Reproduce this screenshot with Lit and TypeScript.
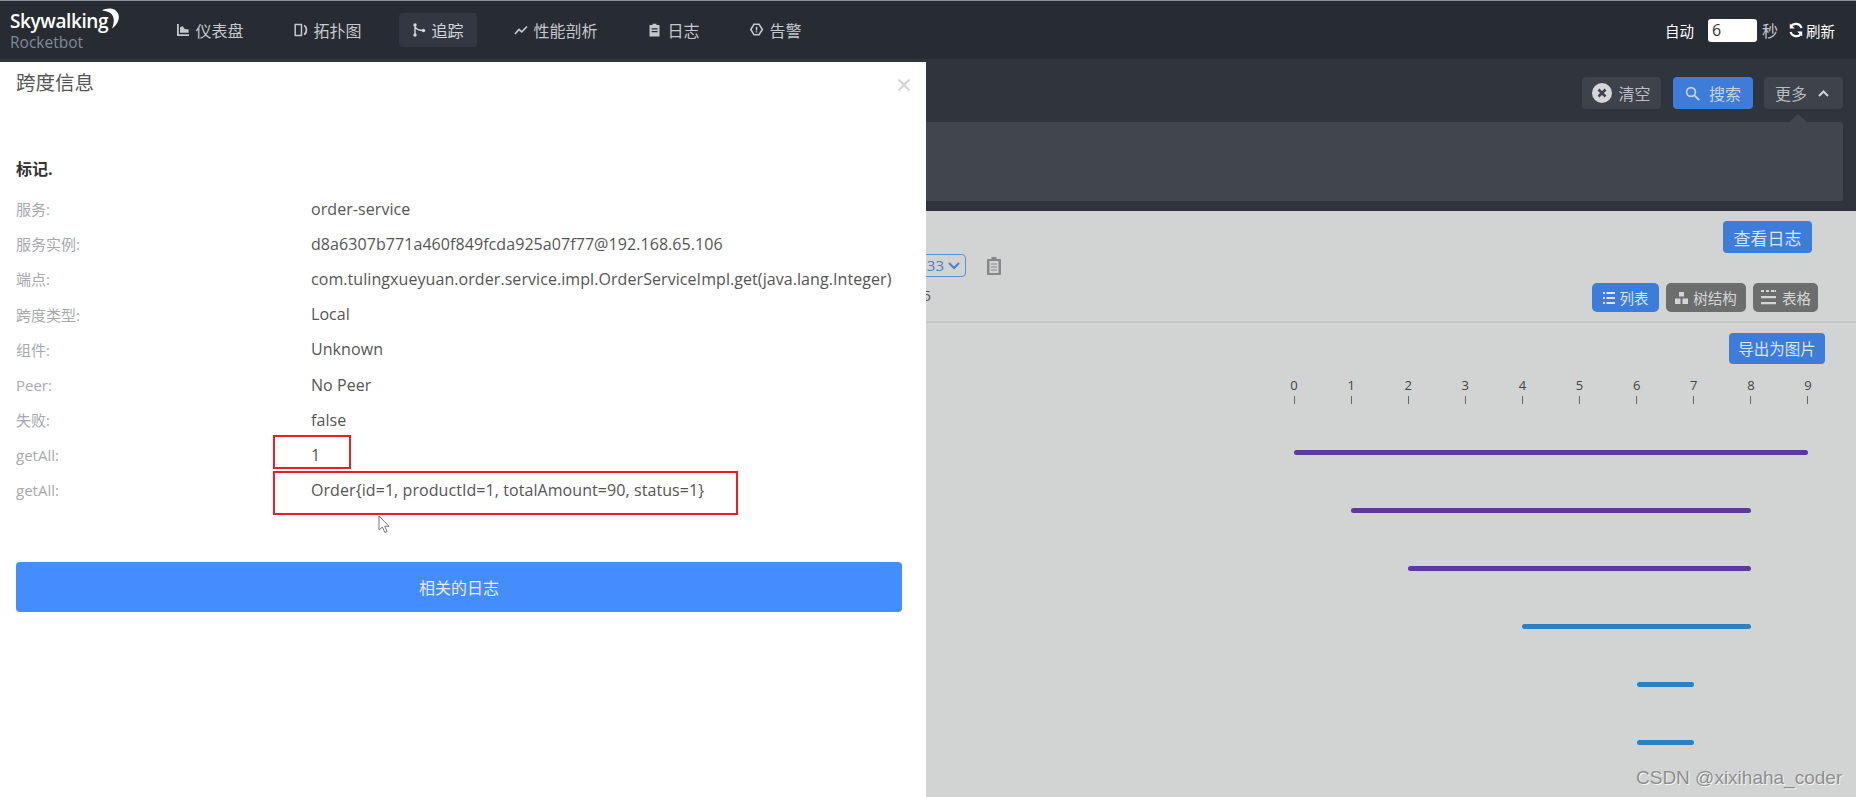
import { LitElement, html, css, svg } from "lit";
import { customElement } from "lit/decorators.js";

const NAV = [
  { t: "仪表盘", i: svg`<path d="M1 1v12h12v-1.800H2.800V1z"/><path d="M4 9.800V4.600L6.400 3l2.400 3 3.800.4v3.400z"/>` },
  { t: "拓扑图", i: svg`<path d="M1.200 1.500h6.300v11H1.200z" fill="none" stroke="currentColor" stroke-width="1.500"/><path d="M10 2.500c3.200 1 3.200 8 0 9" fill="none" stroke="currentColor" stroke-width="1.700"/>` },
  { t: "追踪", active: true, i: svg`<circle cx="3" cy="2" r="1.700"/><circle cx="3" cy="12" r="1.700"/><circle cx="11.500" cy="7.500" r="1.700"/><path d="M3 2v10M3 3.500c1 3 4 4 8.500 4" fill="none" stroke="currentColor" stroke-width="1.400"/>` },
  { t: "性能剖析", i: svg`<path d="M1 11l4-4.500 2.800 2.400L13 3.500" fill="none" stroke="currentColor" stroke-width="1.700"/>` },
  { t: "日志", i: svg`<path fill-rule="evenodd" d="M1.500 2H4.500V.8h4V2h3v11.500h-10zM3.600 5.200v1.200h6V5.200zm0 2.800v1.200h6V8z"/>` },
  { t: "告警", i: svg`<path d="M4 1.200h5L12.400 6.500 9 11.800H4L.8 6.500z" fill="none" stroke="currentColor" stroke-width="1.600"/><path d="M5.800 3.800h1.500v3.600H5.800zM5.800 8.200h1.500v1.400H5.800z"/>` },
];

const ROWS: [string, string][] = [
  ["服务:", "order-service"],
  ["服务实例:", "d8a6307b771a460f849fcda925a07f77@192.168.65.106"],
  ["端点:", "com.tulingxueyuan.order.service.impl.OrderServiceImpl.get(java.lang.Integer)"],
  ["跨度类型:", "Local"],
  ["组件:", "Unknown"],
  ["Peer:", "No Peer"],
  ["失败:", "false"],
  ["getAll:", "1"],
  ["getAll:", "Order{id=1, productId=1, totalAmount=90, status=1}"],
];

const BARS = [
  { from: 0, to: 9, c: "#5e3a96" },
  { from: 1, to: 8, c: "#5e3a96" },
  { from: 2, to: 8, c: "#5e3a96" },
  { from: 4, to: 8, c: "#2f80bd" },
  { from: 6, to: 7, c: "#2f80bd" },
  { from: 6, to: 7, c: "#2f80bd" },
];

@customElement("app-root")
export class AppRoot extends LitElement {
  static styles = css`
    :host {
      display: block;
      position: relative;
      height: 797px;
      overflow: hidden;
      background: #d2d4d4;
      font-family: "Open Sans", "Noto Sans CJK SC", sans-serif;
      font-size: 16px;
    }
    .header {
      height: 60px;
      box-sizing: border-box;
      border-top: 1px solid #8b8f95;
      border-bottom: 1px solid #33373e;
      background: #272b32;
      display: flex;
      align-items: center;
      color: #c4c8cb;
    }
    .logo { width: 162.500px; flex: none; padding-left: 10px; box-sizing: border-box; position: relative; height: 46px; margin-top: 2px; }
    .logo .sky { color: #fff; font-family: "Open Sans", sans-serif; font-weight: 600; font-size: 19px; line-height: 26px; letter-spacing: -.4px; display: block; }
    .logo .rb { color: #7f8b98; font-family: "Open Sans", sans-serif; font-weight: 500; font-size: 15.500px; line-height: 17px; display: block; }
    .logo svg { position: absolute; left: 101px; top: 0; }
    .nav { display: flex; align-items: center; gap: 24px; }
    .item { display: flex; align-items: center; gap: 6px; height: 34px; padding: 0 13px; border-radius: 4px; font-size: 16px; white-space: nowrap; }
    .item.active { background: #333741; color: #d4d7da; }
    .item svg { fill: currentColor; width: 14px; height: 14px; flex: none; }
    .right { margin-left: auto; display: flex; align-items: center; padding-right: 21px; font-size: 14.500px; }
    .auto { color: #fff; }
    .input { width: 49px; height: 23px; margin: 0 5px 0 14px; background: #fff; border-radius: 3px; color: #333; font-size: 16px; line-height: 23px; padding-left: 4px; box-sizing: border-box; }
    .sec { font-size: 16px; }
    .refresh { color: #fff; display: flex; align-items: center; margin-left: 10px; gap: 2px; }
    .refresh svg { width: 16px; height: 16px; }

    .toolbar { height: 151px; box-sizing: border-box; background: #30343c; padding: 17px 13px 0; color: #b9bdc1; }
    .tools { display: flex; justify-content: flex-end; gap: 11px; }
    .btn { height: 32px; display: flex; align-items: center; justify-content: center; border-radius: 4px; background: #3e424b; font-size: 16px; gap: 6px; box-sizing: border-box; }
    .btn svg { flex: none; }
    .clear { width: 79px; margin-right: 1px; }
    .search { width: 80px; background: #3d7cd9; color: #c5d4ea; gap: 9px; }
    .more { width: 79px; gap: 11px; padding-right: 3px; }
    .panel { position: relative; margin-top: 13px; height: 79px; border-radius: 3px; background: #41454e; }
    .panel::before { content: ""; position: absolute; top: -8px; right: 36px; border: 9px solid transparent; border-top: 0; border-bottom: 8px solid #41454e; }

    .info { height: 112px; box-sizing: border-box; border-bottom: 2px solid #c6c8c8; display: flex; justify-content: space-between; }
    .meta { padding-left: 880px; }
    .selrow { display: flex; align-items: center; gap: 21px; margin-top: 43px; }
    .select { width: 86px; height: 23px; box-sizing: border-box; border: 1px solid #5d8fdc; border-radius: 4px; color: #4a7fd0; font-size: 15px; line-height: 21px; display: flex; justify-content: flex-end; align-items: center; gap: 3px; padding-right: 4px; }
    .digit { font-size: 14px; color: #555; margin: 9px 0 0 43px; line-height: 20px; }
    .acts { display: flex; flex-direction: column; align-items: flex-end; padding: 10px 38px 0 0; }
    .pri { background: #3d7cd9; color: #d8e5f6; border-radius: 4px; display: flex; align-items: center; justify-content: center; }
    .log { width: 89px; height: 32px; font-size: 17px; margin-right: 6px; }
    .views { display: flex; gap: 7px; margin-top: 30px; }
    .view { height: 29px; border-radius: 5px; display: flex; align-items: center; justify-content: center; gap: 5px; font-size: 14.500px; box-sizing: border-box; }
    .view.on { width: 67px; background: #3d7cd9; color: #d8e5f6; }
    .view.off { background: #6c6e6e; color: #d4d6d6; }
    .view svg { flex: none; fill: currentColor; }

    .timeline { display: flex; flex-direction: column; align-items: flex-end; }
    .export { width: 96px; height: 31px; font-size: 15.500px; margin: 10px 31px 0 0; }
    .chart { align-self: flex-start; margin-left: 1294px; width: 514px; }
    .ticks { display: flex; justify-content: space-between; margin-top: 12px; }
    .tick { width: 0; display: flex; flex-direction: column; align-items: center; color: #444; font-size: 13px; line-height: 18px; }
    .tick i { display: block; flex: none; width: 1px; height: 8px; background: #666; margin-top: 2px; }
    .bars { margin-top: 46px; display: flex; flex-direction: column; gap: 53px; }
    .bar { height: 5px; border-radius: 3px; }

    .drawer { position: absolute; left: 0; top: 62px; bottom: 0; width: 926px; background: #fff; padding: 0 24px 0 16px; box-sizing: border-box; color: #555; }
    .title { font-size: 19.500px; line-height: 24px; margin-top: 9px; color: #555; }
    .close { position: absolute; left: 897px; top: 16px; }
    .tag { font-size: 16px; font-weight: 700; color: #333; line-height: 22px; margin: 63px 0 11px; }
    .row { height: 35.200px; display: flex; align-items: center; white-space: nowrap; }
    .row .k { width: 295px; flex: none; color: #a6a9ad; font-size: 15px; }
    .row .v { color: #555; letter-spacing: .07px; }
    .rel { height: 50px; margin-top: 54px; border-radius: 4px; background: #448dfe; color: #e4eefd; font-size: 16px; display: flex; align-items: center; justify-content: center; width: 886px; }
    .red { position: absolute; border: 2px solid #ee1c25; box-sizing: border-box; }
    .r1 { left: 273px; top: 373px; width: 78px; height: 34px; }
    .r2 { left: 273px; top: 409px; width: 465px; height: 44px; }
    .cursor { position: absolute; left: 378px; top: 453px; }
    .mark { position: absolute; left: 1636px; top: 766px; font-family: "Liberation Sans", sans-serif; font-size: 19px; color: #8d8f8f; text-shadow: 1px 1px 0 #f4f4f4; line-height: 24px; }
  `;

  render() {
    return html`
      <div class="header">
        <div class="logo">
          <span class="sky">Skywalking</span>
          <span class="rb">Rocketbot</span>
          <svg width="19" height="21" viewBox="0 0 19 21"><path d="M1 2.500C6 -.500 15 -.500 17.500 6.500 19 11.500 15.500 17.500 11 20.500 13 15 13.500 11 11.500 7.500 9.500 4 5.500 3 1 2.500z" fill="#fff"/></svg>
        </div>
        <div class="nav">
          ${NAV.map(
            (n) => html`<div class="item ${n.active ? "active" : ""}"><svg viewBox="0 0 14 14">${n.i}</svg><span>${n.t}</span></div>`
          )}
        </div>
        <div class="right">
          <span class="auto">自动</span>
          <div class="input">6</div>
          <span class="sec">秒</span>
          <div class="refresh">
            <svg viewBox="0 0 16 16"><path d="M13.500 6A6 6 0 0 0 3 4.200M2.500 10A6 6 0 0 0 13 11.800" fill="none" stroke="currentColor" stroke-width="2.200"/><path d="M1.800 1.400v5h5zM14.200 14.600v-5h-5z" fill="currentColor"/></svg>
            <span>刷新</span>
          </div>
        </div>
      </div>

      <div class="toolbar">
        <div class="tools">
          <div class="btn clear">
            <svg width="20" height="20" viewBox="0 0 20 20"><circle cx="10" cy="10" r="10" fill="#d5d6d8"/><path d="M6.500 6.500l7 7M13.500 6.500l-7 7" stroke="#3e424b" stroke-width="2.600"/></svg>
            <span>清空</span>
          </div>
          <div class="btn search">
            <svg width="15" height="15" viewBox="0 0 15 15"><circle cx="6" cy="6" r="4.400" fill="none" stroke="#c5d4ea" stroke-width="1.700"/><path d="M9.200 9.200l5 5" stroke="#c5d4ea" stroke-width="1.900"/></svg>
            <span>搜索</span>
          </div>
          <div class="btn more">
            <span>更多</span>
            <svg width="11" height="7" viewBox="0 0 11 7"><path d="M1 6l4.500-4.500L10 6" fill="none" stroke="#d0d3d6" stroke-width="2"/></svg>
          </div>
        </div>
        <div class="panel"></div>
      </div>

      <div class="info">
        <div class="meta">
          <div class="selrow">
            <div class="select">
              <span>33</span>
              <svg width="14" height="8" viewBox="0 0 14 8"><path d="M2 1l5 5 5-5" fill="none" stroke="#4a7fd0" stroke-width="2"/></svg>
            </div>
            <svg width="14" height="18" viewBox="0 0 14 18"><path d="M4.500 0h5v2H13a1 1 0 0 1 1 1v14a1 1 0 0 1-1 1H1a1 1 0 0 1-1-1V3a1 1 0 0 1 1-1h3.500z" fill="#85888a"/><rect x="2.500" y="4" width="9" height="12" fill="#d2d4d4"/><path d="M4 7h6M4 10h6M4 13h6" stroke="#85888a" stroke-width="1.200"/></svg>
          </div>
          <div class="digit">5</div>
        </div>
        <div class="acts">
          <div class="pri log">查看日志</div>
          <div class="views">
            <div class="view on">
              <svg width="12" height="14" viewBox="0 0 12 14"><path d="M0 1h2v2H0zM3.500 1H12v2H3.500zM0 6h2v2H0zM3.500 6H12v2H3.500zM0 11h2v2H0zM3.500 11H12v2H3.500z"/></svg>
              <span>列表</span>
            </div>
            <div class="view off" style="width:80px">
              <svg width="13" height="12" viewBox="0 0 13 12"><path d="M4 0h5v4.500H4zM0 6.500h5.500V12H0zM7.500 6.500H13V12H7.500z"/></svg>
              <span>树结构</span>
            </div>
            <div class="view off" style="width:65px">
              <svg width="17" height="17" viewBox="0 0 17 17"><path d="M1 1h3v2H1zM6 1h3v2H6zM11 1h3v2h-3zM14.500 1H16v2h-1.500zM1 7h15v2.200H1zM1 13h15v2.200H1z"/></svg>
              <span>表格</span>
            </div>
          </div>
        </div>
      </div>

      <div class="timeline">
        <div class="pri export">导出为图片</div>
        <div class="chart">
          <div class="ticks">
            ${[0, 1, 2, 3, 4, 5, 6, 7, 8, 9].map((n) => html`<div class="tick"><span>${n}</span><i></i></div>`)}
          </div>
          <div class="bars">
            ${BARS.map(
              (b) => html`<div class="bar" style="margin-left:${(b.from / 9) * 100}%;width:${((b.to - b.from) / 9) * 100}%;background:${b.c}"></div>`
            )}
          </div>
        </div>
      </div>

      <div class="mark">CSDN @xixihaha_coder</div>

      <div class="drawer">
        <div class="title">跨度信息</div>
        <svg class="close" width="14" height="14" viewBox="0 0 14 14"><path d="M1.500 1.500l11 11M12.500 1.500l-11 11" stroke="#d3d4d6" stroke-width="2"/></svg>
        <div class="tag">标记.</div>
        ${ROWS.map(([k, v]) => html`<div class="row"><span class="k">${k}</span><span class="v">${v}</span></div>`)}
        <div class="rel">相关的日志</div>
        <div class="red r1"></div>
        <div class="red r2"></div>
        <svg class="cursor" width="13" height="18" viewBox="0 0 13 18"><path d="M1 1v14l3.400-3 2.400 5.500 2.300-1-2.400-5.200H11z" fill="#fff" stroke="#777" stroke-width="1"/></svg>
      </div>
    `;
  }
}
